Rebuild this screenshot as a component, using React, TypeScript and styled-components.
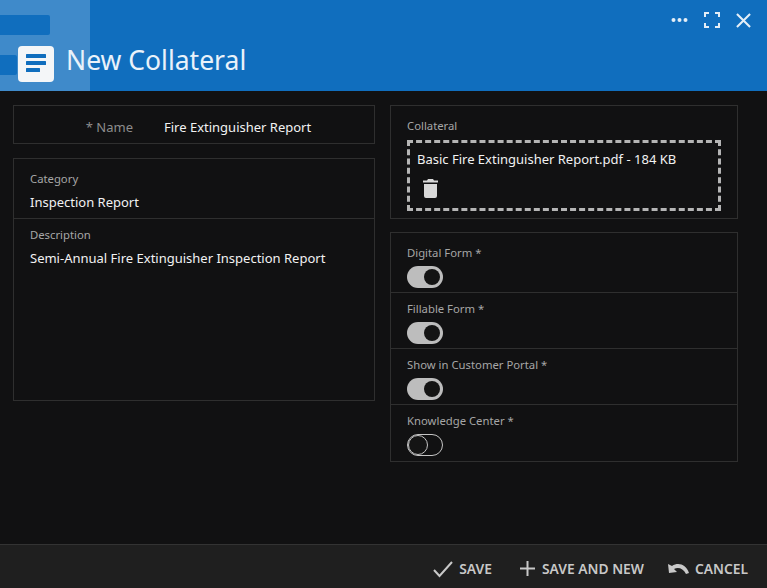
import React, { FC } from 'react';
import styled, { createGlobalStyle } from 'styled-components';

const GlobalStyle = createGlobalStyle`
  html, body {
    margin: 0;
    height: 100%;
    background: #111112;
  }
  #root {
    height: 100%;
  }
  * {
    box-sizing: border-box;
  }
`;

const Page = styled.div`
  height: 588px;
  width: 767px;
  display: flex;
  flex-direction: column;
  background: #111112;
  color: #f2f2f2;
  font-family: "Noto Sans", "Open Sans", sans-serif;
  overflow: hidden;
`;

const Header = styled.header`
  position: relative;
  height: 91px;
  flex: none;
  background: #106ebe;
  display: flex;
  align-items: flex-end;
  padding: 0 0 9px 18px;
  gap: 12px;
  overflow: hidden;
`;

const Watermark = styled.div`
  position: absolute;
  left: 0;
  top: 0;
  width: 90px;
  height: 91px;
  background: #3f8aca;
`;

const WatermarkBar = styled.div<{ $top: number; $width: number; $height: number }>`
  position: absolute;
  left: 0;
  top: ${(p) => p.$top}px;
  width: ${(p) => p.$width}px;
  height: ${(p) => p.$height}px;
  background: #106ebe;
  border-radius: 0 2px 2px 0;
`;

const HeaderIcon = styled.div`
  position: relative;
  width: 36px;
  height: 36px;
  background: #f4f6f8;
  border-radius: 4px;
  display: flex;
  align-items: center;
  justify-content: center;
`;

const Title = styled.h1`
  position: relative;
  margin: 0 0 3px;
  font-size: 26.5px;
  line-height: 37px;
  font-weight: 400;
  color: #e9f2fa;
`;

const WindowControls = styled.div`
  position: absolute;
  top: 11px;
  right: 16px;
  display: flex;
  align-items: center;
  gap: 16px;
`;

const Content = styled.main`
  flex: 1;
  display: grid;
  grid-template-columns: 362px 348px;
  column-gap: 15px;
  padding: 14px 0 0 13px;
  align-items: start;
`;

const Column = styled.div<{ $gap: number }>`
  display: flex;
  flex-direction: column;
  gap: ${(p) => p.$gap}px;
`;

const Panel = styled.section<{ $height: number }>`
  height: ${(p) => p.$height}px;
  border: 1px solid #2f2f2f;
  display: flex;
  flex-direction: column;
`;

const NameRow = styled.div`
  flex: 1;
  display: grid;
  grid-template-columns: 119px 1fr;
  column-gap: 31px;
  align-items: center;
  padding-top: 4px;
  font-size: 13px;
`;

const NameLabel = styled.span`
  text-align: right;
  color: #8d8d8d;
`;

const Field = styled.div<{ $height?: number; $top?: number }>`
  height: ${(p) => (p.$height ? `${p.$height}px` : 'auto')};
  padding: ${(p) => p.$top ?? 12}px 16px 0;
  border-bottom: 1px solid #2f2f2f;
  &:last-child {
    border-bottom: none;
  }
`;

const Label = styled.div`
  font-size: 11.3px;
  line-height: 16px;
  color: #a6a6a6;
`;

const Value = styled.div`
  margin-top: 6px;
  font-size: 13px;
  line-height: 18px;
  color: #f2f2f2;
`;

const DropZone = styled.div`
  height: 71px;
  margin: 6px 0 0;
  width: 314px;
  border: 3px dashed #b5b5b5;
  padding: 7px 7px;
  font-size: 13px;
  line-height: 18px;
`;

const TrashButton = styled.div`
  margin: 11px 0 0 6px;
  line-height: 0;
`;

const ToggleField = styled(Field)`
  padding-top: 8px;
  height: 56px;
  &:first-child {
    height: 60px;
    padding-top: 12px;
  }
`;

const Toggle = styled.div<{ $on: boolean }>`
  margin-top: 5px;
  width: 36px;
  height: 22px;
  border-radius: 11px;
  display: flex;
  justify-content: ${(p) => (p.$on ? 'flex-end' : 'flex-start')};
  background: ${(p) => (p.$on ? '#bdbdbd' : 'transparent')};
  border: ${(p) => (p.$on ? 'none' : '1px solid #c4c4c4')};
  padding: ${(p) => (p.$on ? '3px' : '0')};
`;

const Knob = styled.div<{ $on: boolean }>`
  width: ${(p) => (p.$on ? 16 : 20)}px;
  height: ${(p) => (p.$on ? 16 : 20)}px;
  border-radius: 50%;
  background: #141414;
  border: ${(p) => (p.$on ? 'none' : '1px solid #c4c4c4')};
`;

const Footer = styled.footer`
  height: 44px;
  flex: none;
  background: #1f1f1f;
  border-top: 1px solid #333;
  display: flex;
  align-items: center;
  justify-content: flex-end;
  padding: 4px 19px 0 0;
  gap: 24px;
`;

const FooterButton = styled.button`
  display: flex;
  align-items: center;
  gap: 6px;
  padding: 0;
  border: none;
  background: none;
  color: #c8c8c8;
  font-family: inherit;
  font-size: 13.8px;
  font-weight: 600;
  &:first-child {
    margin-right: 3px;
  }
`;

const toggles = [
  { label: 'Digital Form *', on: true },
  { label: 'Fillable Form *', on: true },
  { label: 'Show in Customer Portal *', on: true },
  { label: 'Knowledge Center *', on: false },
];

const App: FC = () => {
  return (
    <Page>
      <GlobalStyle />
      <Header>
        <Watermark>
          <WatermarkBar $top={15} $width={50} $height={20} />
          <WatermarkBar $top={55} $width={17} $height={20} />
        </Watermark>
        <HeaderIcon>
          <svg width="20" height="22" viewBox="0 0 20 22" fill="#106ebe">
            <rect x="0" y="1" width="20" height="4" rx="0.5" />
            <rect x="0" y="8" width="20" height="4" rx="0.5" />
            <rect x="0" y="15" width="14" height="4" rx="0.5" />
          </svg>
        </HeaderIcon>
        <Title>New Collateral</Title>
        <WindowControls>
          <svg width="17" height="18" viewBox="0 0 17 18" fill="#e4eef7">
            <circle cx="2.5" cy="9" r="2" />
            <circle cx="8.5" cy="9" r="2" />
            <circle cx="14.5" cy="9" r="2" />
          </svg>
          <svg width="16" height="16" viewBox="0 0 16 16" fill="none" stroke="#e4eef7" strokeWidth="2">
            <path d="M1 5V1h4M11 1h4v4M15 11v4h-4M5 15H1v-4" />
          </svg>
          <svg width="15" height="15" viewBox="0 0 16 16" fill="none" stroke="#e4eef7" strokeWidth="2.2">
            <path d="M1 1l14 14M15 1L1 15" />
          </svg>
        </WindowControls>
      </Header>

      <Content>
        <Column $gap={14}>
          <Panel $height={39}>
            <NameRow>
              <NameLabel>* Name</NameLabel>
              <span>Fire Extinguisher Report</span>
            </NameRow>
          </Panel>
          <Panel $height={243}>
            <Field $height={60}>
              <Label>Category</Label>
              <Value>Inspection Report</Value>
            </Field>
            <Field $top={8}>
              <Label>Description</Label>
              <Value>Semi-Annual Fire Extinguisher Inspection Report</Value>
            </Field>
          </Panel>
        </Column>

        <Column $gap={13}>
          <Panel $height={114}>
            <Field>
              <Label>Collateral</Label>
              <DropZone>
                Basic Fire Extinguisher Report.pdf - 184 KB
                <TrashButton>
                  <svg width="15" height="19" viewBox="0 0 15 19" fill="#d8d8d8">
                    <path d="M5 0h5l1 1.5h4V3.5H0V1.5h4zM1 5h13v12a2 2 0 0 1-2 2H3a2 2 0 0 1-2-2z" />
                  </svg>
                </TrashButton>
              </DropZone>
            </Field>
          </Panel>
          <Panel $height={230}>
            {toggles.map((t) => (
              <ToggleField key={t.label}>
                <Label>{t.label}</Label>
                <Toggle $on={t.on}>
                  <Knob $on={t.on} />
                </Toggle>
              </ToggleField>
            ))}
          </Panel>
        </Column>
      </Content>

      <Footer>
        <FooterButton>
          <svg width="20" height="18" viewBox="0 0 20 18" fill="none" stroke="#c8c8c8" strokeWidth="2">
            <path d="M1 10l5.5 6L19 2" />
          </svg>
          SAVE
        </FooterButton>
        <FooterButton>
          <svg width="17" height="17" viewBox="0 0 17 17" fill="none" stroke="#c8c8c8" strokeWidth="2">
            <path d="M8.5 1v15M1 8.5h15" />
          </svg>
          SAVE AND NEW
        </FooterButton>
        <FooterButton>
          <svg width="21" height="14" viewBox="0 0 21 14" fill="#c8c8c8">
            <path d="M0 2l1 9 8-1-3-3c4-2 9-1 12 5l3-1C18 2 10 0 4 4z" />
          </svg>
          CANCEL
        </FooterButton>
      </Footer>
    </Page>
  );
};

export default App;
